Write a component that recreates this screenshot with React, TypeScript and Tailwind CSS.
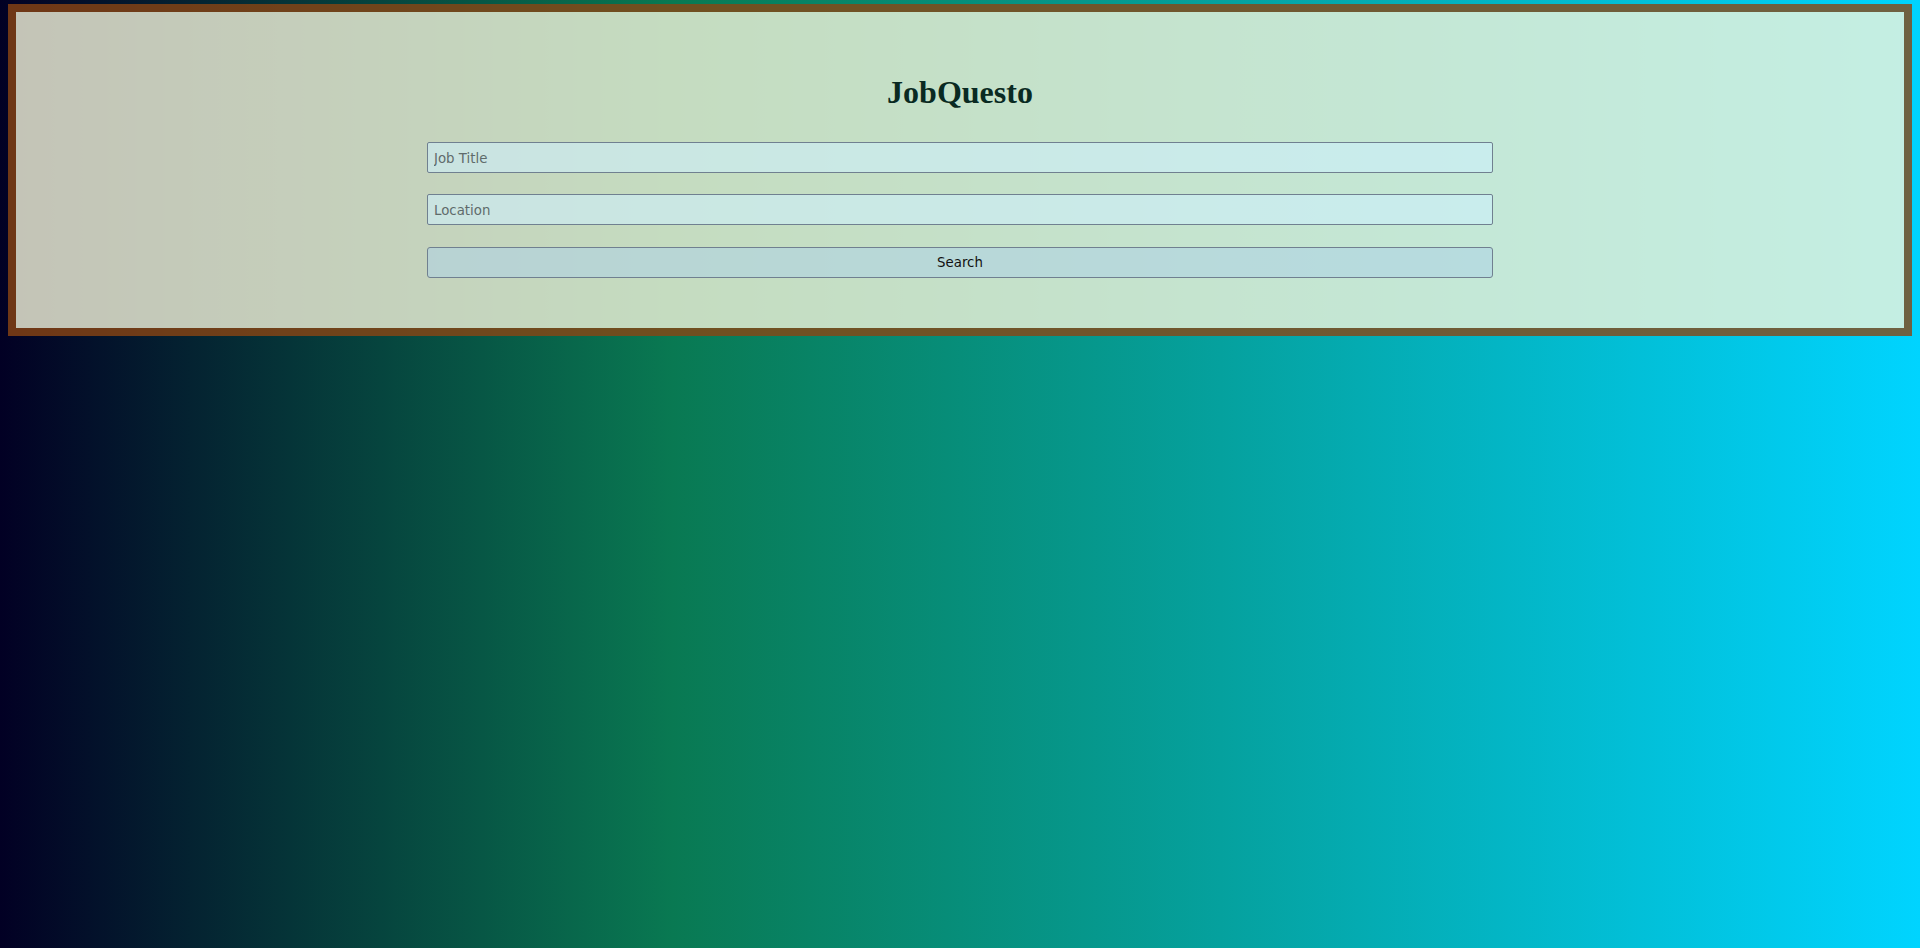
export default function App() {
  return (
    <div className="min-h-screen bg-[linear-gradient(90deg,#020024_0%,#097952_35%,#00d4ff_100%)] pt-1 px-2 font-['DejaVu_Sans',sans-serif]">
      <div className="border-8 border-[rgba(139,69,19,0.8)] bg-[rgba(245,245,220,0.8)] bg-clip-padding pt-[62px] pb-[50px]">
        <h1 className="text-center font-['Liberation_Serif',serif] text-[32px] font-bold leading-[36px] text-[#0a2a22]">
          JobQuesto
        </h1>
        <form className="mx-auto mt-[32px] flex w-[1066px] flex-col gap-[21px]" onSubmit={(e) => e.preventDefault()}>
          <input
            type="text"
            placeholder="Job Title"
            className="h-[31px] rounded-[2px] border border-[#708090] bg-[rgba(205,240,255,0.55)] px-[6px] pt-[1px] text-[13.33px] text-[#222] placeholder:text-[#5f6b6b] outline-none"
          />
          <input
            type="text"
            placeholder="Location"
            className="h-[31px] rounded-[2px] border border-[#708090] bg-[rgba(205,240,255,0.55)] px-[6px] pt-[1px] text-[13.33px] text-[#222] placeholder:text-[#5f6b6b] outline-none"
          />
          <button
            type="submit"
            className="mt-[1px] h-[31px] rounded-[3px] border border-[#708090] bg-[rgba(173,210,230,0.55)] text-[13.33px] text-[#111]"
          >
            Search
          </button>
        </form>
      </div>
    </div>
  );
}
